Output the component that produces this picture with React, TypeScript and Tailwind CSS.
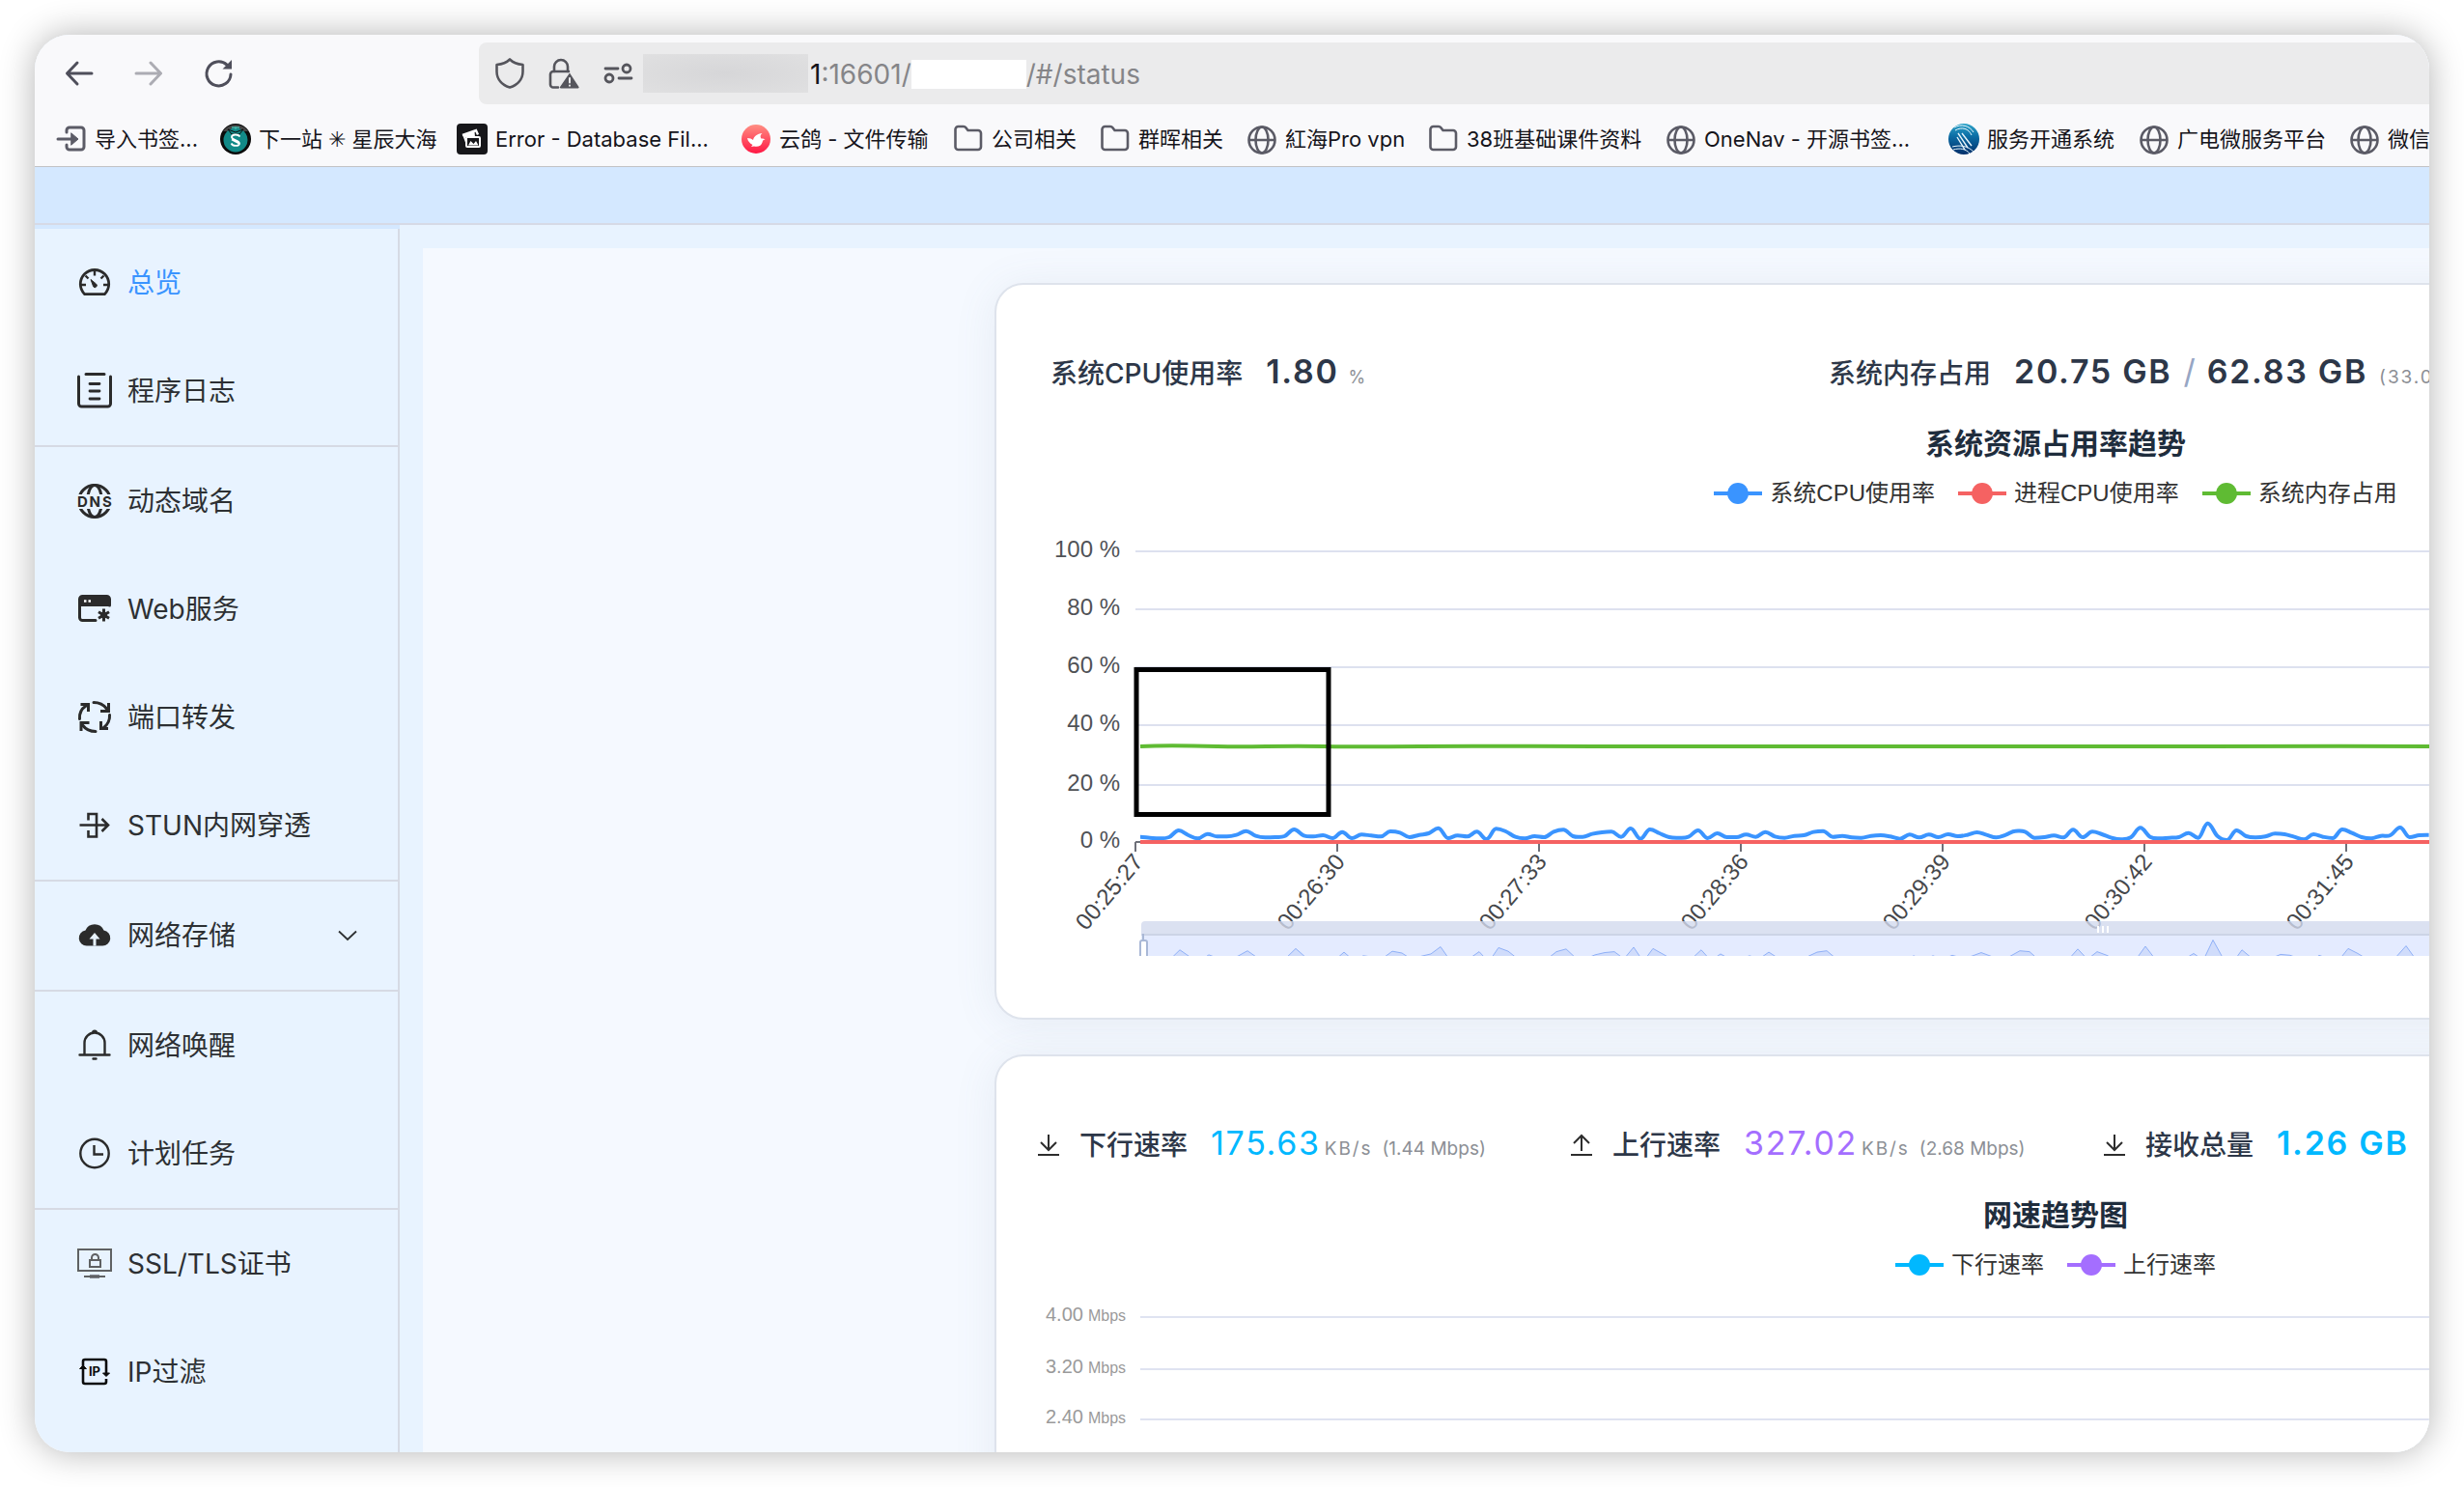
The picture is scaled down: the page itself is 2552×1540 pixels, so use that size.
import type { ReactNode } from "react";

/* ---------- browser chrome ---------- */

const BackIcon = () => (
  <svg viewBox="0 0 32 32" className="size-8" fill="none" stroke="currentColor" strokeWidth="3" strokeLinecap="round" strokeLinejoin="round">
    <path d="M29 16H4M14 5 3.500 16 14 27" />
  </svg>
);

const ForwardIcon = () => (
  <svg viewBox="0 0 32 32" className="size-8" fill="none" stroke="currentColor" strokeWidth="3" strokeLinecap="round" strokeLinejoin="round">
    <path d="M3 16h25M18 5l10.500 11L18 27" />
  </svg>
);

const ReloadIcon = () => (
  <svg viewBox="0 0 32 32" className="size-8" fill="none" stroke="currentColor" strokeWidth="3" strokeLinecap="round">
    <path d="M29 17a12.500 12.500 0 1 1-4-9.800" />
    <path d="M30 2v9.500h-9.500z" fill="currentColor" stroke="none" />
  </svg>
);

const ShieldIcon = () => (
  <svg viewBox="0 0 32 32" className="size-8" fill="none" stroke="currentColor" strokeWidth="2.600" strokeLinejoin="round">
    <path d="M16 1.500C19 4.500 24 6.500 29.500 7v7C29.500 22 24 28 16 30.500 8 28 2.500 22 2.500 14V7C8 6.500 13 4.500 16 1.500z" />
  </svg>
);

const LockWarningIcon = () => (
  <svg viewBox="0 0 32 32" className="size-8" fill="none" stroke="currentColor" strokeWidth="2.600" strokeLinecap="round">
    <path d="M6 14V9a7 7 0 0 1 14 0v5" />
    <path d="M10 30.500H5a3 3 0 0 1-3-3V17a3 3 0 0 1 3-3h16" />
    <path d="M22 15.500 31.500 30a1 1 0 0 1-1 1.500H13a1 1 0 0 1-1-1.500z" fill="currentColor" stroke="none" />
    <path d="M22 21v4.500M22 28.500v.3" stroke="#ebebec" strokeWidth="2" />
  </svg>
);

const PermissionsIcon = () => (
  <svg viewBox="0 0 32 32" className="size-8" fill="none" stroke="currentColor" strokeWidth="2.800" strokeLinecap="round">
    <path d="M3 11h13M17 21h13" />
    <circle cx="25" cy="11" r="4" />
    <circle cx="7" cy="21" r="4" />
  </svg>
);

const ImportIcon = () => (
  <svg viewBox="0 0 32 32" className="size-8 text-[#5b5b66]" fill="none" stroke="currentColor" strokeWidth="3" strokeLinecap="round">
    <path d="M11 9V7a3 3 0 0 1 3-3h12a3 3 0 0 1 3 3v17a3 3 0 0 1-3 3H14a3 3 0 0 1-3-3v-2" />
    <path d="M2 16h18" />
    <path d="m16 10 7 6-7 6z" fill="currentColor" strokeWidth="1" />
  </svg>
);

const FolderIcon = () => (
  <svg viewBox="0 0 32 32" className="size-8 text-[#5b5b66]" fill="none" stroke="currentColor" strokeWidth="2.600" strokeLinejoin="round">
    <path d="M2.500 24V6a3 3 0 0 1 3-3h5.500a3 3 0 0 1 2.400 1.200L15.500 7H26a3 3 0 0 1 3 3v14a3 3 0 0 1-3 3H5.500a3 3 0 0 1-3-3z" />
  </svg>
);

const GlobeIcon = () => (
  <svg viewBox="0 0 32 32" className="size-8 text-[#5b5b66]" fill="none" stroke="currentColor" strokeWidth="2.600">
    <circle cx="16" cy="17" r="13.500" />
    <ellipse cx="16" cy="17" rx="6.500" ry="13.500" />
    <path d="M2.500 17h27" />
  </svg>
);

const StarSeaIcon = () => (
  <svg viewBox="0 0 32 32" className="size-8">
    <circle cx="16" cy="16" r="16" fill="#0c0c0c" />
    <path d="M3 8A16 16 0 0 1 29 8z" fill="#454545" />
    <circle cx="16" cy="17" r="12.500" fill="#128a88" />
    <path d="M8 6l8 3 8-3-4 5h-8z" fill="#128a88" stroke="#0c0c0c" strokeWidth="1" />
    <path d="M12 4h8M16 3v3" stroke="#3fb3a6" strokeWidth="1.500" />
    <path d="M20.500 13.500c-2-3-8.500-2.500-8.500.5s8 3 8 6.500-7 3-8.500 0M12 16.500l8.500 4.500" fill="none" stroke="#fff" strokeWidth="1.800" />
  </svg>
);

const SynologyPhotosIcon = () => (
  <svg viewBox="0 0 32 32" className="size-8">
    <rect width="32" height="32" rx="4" fill="#17171a" />
    <path d="M6 12 20 7l2 4.500" fill="none" stroke="#fff" strokeWidth="2.400" />
    <path d="M6 11.500l3 8V14h10l-.5-6z" fill="#fff" />
    <rect x="10" y="14" width="14" height="10" rx="1" fill="none" stroke="#fff" strokeWidth="2" />
    <path d="M12 22.500l2.500-4.500 3 3 2.500-3 2.500 4.500z" fill="#fff" />
  </svg>
);

const DoveIcon = () => (
  <svg viewBox="0 0 32 32" className="size-8">
    <defs>
      <linearGradient id="dove" x1="0" y1="0" x2="0" y2="1">
        <stop offset="0" stopColor="#ff8f83" />
        <stop offset="1" stopColor="#ff1744" />
      </linearGradient>
    </defs>
    <circle cx="16" cy="16" r="15" fill="url(#dove)" />
    <path d="M7 15c3 0 4.500.8 6 2C14 13 17 10.500 22.500 10c-2.500 2-2 4-1 5.500 0 0 2.500-.5 4 1-2 0-2.500 1-3 3-.8 3.500-4.500 5-8.500 4l-3 .5 1.500-2C9.500 20.500 7.500 18 7 15z" fill="#fff" />
  </svg>
);

const ServiceIcon = () => (
  <svg viewBox="0 0 32 32" className="size-8">
    <defs>
      <linearGradient id="svc" x1="0" y1="0" x2="0" y2="1">
        <stop offset="0" stopColor="#2fa4c8" />
        <stop offset="0.400" stopColor="#0c6ea6" />
        <stop offset="1" stopColor="#04306b" />
      </linearGradient>
      <clipPath id="svcClip"><circle cx="16" cy="16" r="16" /></clipPath>
    </defs>
    <circle cx="16" cy="16" r="16" fill="url(#svc)" />
    <g clipPath="url(#svcClip)" fill="none" stroke="#e8f5fb">
      <path d="M6 4C13 0 22 2 26 9M7 7c7-4 14-2 17 5" strokeWidth="1" />
      <path d="M10 10l10 15M14 10l10 13M9 14l8 13" strokeWidth="1.400" />
      <path d="M4 24c8-2 16-1 22 5M5 27c7-2 13-1 17 4" strokeWidth="1" />
    </g>
  </svg>
);

type Bookmark = { label: string; icon: ReactNode; width: string };

const bookmarks: Bookmark[] = [
  { label: "导入书签...", icon: <ImportIcon />, width: "w-[170px]" },
  { label: "下一站 ✳︎ 星辰大海", icon: <StarSeaIcon />, width: "w-[245px]" },
  { label: "Error - Database Fil...", icon: <SynologyPhotosIcon />, width: "w-[294px]" },
  { label: "云鸽 - 文件传输", icon: <DoveIcon />, width: "w-[220px]" },
  { label: "公司相关", icon: <FolderIcon />, width: "w-[152px]" },
  { label: "群晖相关", icon: <FolderIcon />, width: "w-[152px]" },
  { label: "紅海Pro vpn", icon: <GlobeIcon />, width: "w-[188px]" },
  { label: "38班基础课件资料", icon: <FolderIcon />, width: "w-[246px]" },
  { label: "OneNav - 开源书签...", icon: <GlobeIcon />, width: "w-[293px]" },
  { label: "服务开通系统", icon: <ServiceIcon />, width: "w-[197px]" },
  { label: "广电微服务平台", icon: <GlobeIcon />, width: "w-[218px]" },
  { label: "微信", icon: <GlobeIcon />, width: "w-[120px]" },
];

function BrowserBar() {
  return (
    <div className="shrink-0 border-b border-[#c2c2c5] bg-[#f9f9fb]">
      <div className="flex h-20 items-center pl-[30px]">
        <div className="flex w-[430px] shrink-0 gap-10 text-[#4f4f5b]">
          <button aria-label="后退"><BackIcon /></button>
          <button aria-label="前进" className="opacity-45"><ForwardIcon /></button>
          <button aria-label="刷新"><ReloadIcon /></button>
        </div>
        <div className="flex h-16 flex-1 items-center rounded-l-lg bg-[#ebebec] pl-4 text-[#55555c]">
          <div className="flex gap-6">
            <ShieldIcon />
            <LockWarningIcon />
            <PermissionsIcon />
          </div>
          <div className="mr-0.5 ml-2.5 h-10 w-[171px] bg-[radial-gradient(ellipse_at_center,#d6d6d8,#e0e0e1)]" />
          <div className="flex items-center pt-0.5 text-[28px] leading-10 text-[#858588]">
            <span className="text-[#15141a]">1</span>
            <span>:16601/</span>
            <span className="h-[30px] w-[119px] bg-white" />
            <span>/#/status</span>
          </div>
        </div>
      </div>
      <nav className="flex h-14 items-center overflow-hidden pl-[22px] text-[22px] text-[#15141a]">
        {bookmarks.map((b) => (
          <a key={b.label} href="#" className={`flex shrink-0 items-center gap-2 whitespace-nowrap ${b.width}`}>
            {b.icon}
            <span>{b.label}</span>
          </a>
        ))}
      </nav>
    </div>
  );
}

/* ---------- sidebar ---------- */

const Glyph = ({ children }: { children: ReactNode }) => (
  <svg viewBox="0 0 36 36" className="size-9 shrink-0 overflow-visible text-[#2b2b2b]" fill="none" stroke="currentColor" strokeWidth="2.400">
    {children}
  </svg>
);

const icons = {
  overview: (
    <Glyph>
      <path d="M7.700 29.700A14.700 14.700 0 1 1 28.300 29.700z" strokeLinejoin="round" strokeWidth="2.800" />
      <path d="M18 6v4.500M4 20h5M27 20h5M8.500 10.500l3 3M27.500 10.500l-3 3" />
      <path d="M14 14.500l5.500 4.500a2 2 0 1 1-2.800 2.800z" fill="currentColor" strokeWidth="1" />
    </Glyph>
  ),
  logs: (
    <Glyph>
      <path d="M1.500 3v28a3 3 0 0 0 3 3h27a3 3 0 0 0 3-3V3M9 .500h19" strokeWidth="3" strokeLinecap="round" />
      <path d="M13 10.500h10M13 18h10M13 26h10" strokeWidth="2.800" strokeLinecap="round" />
    </Glyph>
  ),
  dns: (
    <Glyph>
      <defs>
        <clipPath id="dnsClip"><path d="M-1-1h38v12H-1zM-1 26h38v12H-1z" /></clipPath>
      </defs>
      <g clipPath="url(#dnsClip)" strokeWidth="3">
        <circle cx="18" cy="18" r="16.500" />
        <ellipse cx="18" cy="18" rx="7.500" ry="16.500" />
      </g>
      <text x="0 12.500 26" y="24" fontSize="15" fontWeight="700" fill="currentColor" stroke="none">DNS</text>
    </Glyph>
  ),
  web: (
    <Glyph>
      <path d="M33.500 14V7.500a3 3 0 0 0-3-3h-25a3 3 0 0 0-3 3v19a3 3 0 0 0 3 3H19" strokeWidth="3" strokeLinecap="round" />
      <path d="M2 5h32v10H2z" fill="currentColor" stroke="none" />
      <path d="M7 9.500h2.500M11.500 9.500H14" stroke="#fff" strokeWidth="2.600" />
      <path d="M27.500 17.500v13M22 20.800l11 6.400M33 20.800l-11 6.400" strokeWidth="3" />
      <circle cx="27.500" cy="24" r="3.500" fill="currentColor" stroke="none" />
    </Glyph>
  ),
  forward: (
    <Glyph>
      <path d="M17 2.500c6 0 10.500 2.500 13.500 6.500M33.500 15.500c.5 5.500-2 10-6.500 13.500M19 32.500c-6 0-10.500-2.500-13.500-6.500M2.500 19.500C2 14 4.500 9 9 6" strokeWidth="3" strokeLinecap="round" />
      <path d="M32.500 3v8.500H24M32 29.500h-7.500V22M4 32v-8.500h8.500M3.500 4.500h8V12" strokeWidth="3" />
    </Glyph>
  ),
  stun: (
    <Glyph>
      <path d="M2.500 17.500h29M25.500 11l6.500 6.500-6.500 6.500M11.500 12.500V6H20v23.500h-8.500V23" strokeWidth="2.600" />
    </Glyph>
  ),
  storage: (
    <Glyph>
      <path d="M10 28.500A8 8 0 0 1 8.500 12.600 10.300 10.300 0 0 1 27.500 12.600 8 8 0 0 1 26 28.500z" fill="currentColor" stroke="none" />
      <path d="M18 15l5.500 6.500H19.500V28.500h-3V21.500H12.500z" fill="#e8f3ff" stroke="none" />
    </Glyph>
  ),
  wake: (
    <Glyph>
      <path d="M2.500 27.500h31M7.500 27V15a10.500 10.500 0 0 1 21 0v12M16.500 31.500h3" strokeLinecap="round" />
      <path d="M15 4.500a3 3 0 0 1 6 0z" fill="currentColor" stroke="none" />
    </Glyph>
  ),
  cron: (
    <Glyph>
      <circle cx="18" cy="17.500" r="14.700" />
      <path d="M17.500 9v9.500H27" />
    </Glyph>
  ),
  ssl: (
    <Glyph>
      <g stroke="#5f6163" strokeWidth="2">
        <path d="M1 3h34v22H1zM13 14h11v7H13zM15 14v-2.500a3.500 3.500 0 0 1 7 0V14M7 31h22" />
        <path d="M13 31h10" strokeWidth="3.500" />
      </g>
    </Glyph>
  ),
  ip: (
    <Glyph>
      <g stroke="#0c0c0c">
        <path d="M6 15V7a2 2 0 0 1 2-2h20a2 2 0 0 1 2 2v12M30 25v3a2 2 0 0 1-2 2H8a2 2 0 0 1-2-2V13" strokeWidth="2.600" />
        <path d="M2.500 14.500 6 11l3.500 3.500zM26.500 19l3.500 3.500 3.500-3.500z" fill="#0c0c0c" strokeWidth="1" />
      </g>
      <text x="18" y="22" textAnchor="middle" fontSize="13" fontWeight="700" fill="#0c0c0c" stroke="none">IP</text>
    </Glyph>
  ),
};

type Item = { label: string; icon: ReactNode; active?: boolean; submenu?: boolean };

const groups: Item[][] = [
  [
    { label: "总览", icon: icons.overview, active: true },
    { label: "程序日志", icon: icons.logs },
  ],
  [
    { label: "动态域名", icon: icons.dns },
    { label: "Web服务", icon: icons.web },
    { label: "端口转发", icon: icons.forward },
    { label: "STUN内网穿透", icon: icons.stun },
  ],
  [{ label: "网络存储", icon: icons.storage, submenu: true }],
  [
    { label: "网络唤醒", icon: icons.wake },
    { label: "计划任务", icon: icons.cron },
  ],
  [
    { label: "SSL/TLS证书", icon: icons.ssl },
    { label: "IP过滤", icon: icons.ip },
  ],
];

function Sidebar() {
  return (
    <aside className="flex w-[378px] shrink-0 flex-col border-t-4 border-t-[#d4e8ff]">
      <nav className="flex-1 divide-y-2 divide-[#d6dae4] border-r-2 border-[#d6dae4]">
        {groups.map((group) => (
          <ul key={group[0].label}>
            {group.map((item) => (
              <li key={item.label}>
                <a
                  href="#"
                  className={`flex h-28 items-center gap-4 pr-[42px] pl-11 text-[28px] ${item.active ? "text-[#3a94ff]" : "text-[#2d3033]"}`}
                >
                  {item.icon}
                  <span className="flex-1 whitespace-nowrap">{item.label}</span>
                  {item.submenu && (
                    <svg viewBox="0 0 20 20" className="size-5" fill="none" stroke="#2d3033" strokeWidth="1.800">
                      <path d="M1 5.500l9 8.500 9-8.500" />
                    </svg>
                  )}
                </a>
              </li>
            ))}
          </ul>
        ))}
      </nav>
    </aside>
  );
}

/* ---------- cards ---------- */

/* CPU load sampled every three seconds, nine units to the percent. */
const cpuSamples = [
  16, 13, 11, 15, 36, 21, 11, 25, 17, 17, 22, 34, 19, 14, 15, 18, 39, 20, 17, 21, 12, 31, 12, 23, 20, 17, 33, 29, 15, 22,
  27, 43, 12, 20, 17, 32, 9, 41, 33, 16, 11, 18, 15, 32, 38, 18, 16, 25, 30, 32, 16, 42, 10, 39, 27, 15, 13, 16, 36, 12,
  27, 15, 15, 23, 16, 31, 17, 13, 19, 21, 31, 34, 16, 19, 14, 13, 19, 21, 17, 10, 23, 14, 23, 15, 24, 18, 22, 30, 22, 14,
  22, 34, 32, 13, 15, 20, 14, 38, 15, 32, 24, 13, 8, 14, 44, 16, 11, 13, 15, 28, 13, 58, 19, 6, 36, 18, 14, 17, 26, 24,
  16, 8, 24, 16, 12, 39, 28, 15, 11, 19, 21, 45, 15, 21, 22,
];

const BASE = 345;
const LEFT = 149;

function smoothPath(values: number[], step: number) {
  const pts = values.map((v, i) => [LEFT + i * step, BASE - v / 3]);
  const slope = pts.map((p, i) => {
    if (i === 0 || i === pts.length - 1) return 0;
    const before = p[1] - pts[i - 1][1];
    const after = pts[i + 1][1] - p[1];
    return before * after <= 0 ? 0 : (before + after) / 2;
  });
  return pts.reduce((d, [x, y], i) => {
    if (i === 0) return `M${x} ${y}`;
    const [px, py] = pts[i - 1];
    const h = step * 0.38;
    return `${d}C${px + h} ${py + slope[i - 1] * 0.38} ${x - h} ${y - slope[i] * 0.38} ${x} ${y}`;
  }, "");
}

const cpuPath = smoothPath(cpuSamples, 9.96);
const shadowPoints = cpuSamples.map((v, i) => `${150 + i * 10},${473.5 - v * 0.465}`).join(" ");

const percentTicks = [
  { label: "100 %", y: 44 },
  { label: "80 %", y: 104 },
  { label: "60 %", y: 164 },
  { label: "40 %", y: 224 },
  { label: "20 %", y: 286 },
  { label: "0 %", y: BASE },
];

const timeTicks = ["00:25:27", "00:26:30", "00:27:33", "00:28:36", "00:29:39", "00:30:42", "00:31:45"];

function UsageChart() {
  return (
    <svg viewBox="0 0 2194 463" className="h-[463px] w-[2194px]" fill="none" fontFamily="Liberation Sans, sans-serif">
      {percentTicks.map((t) => (
        <g key={t.label}>
          {t.y < BASE && <path d={`M144 ${t.y}H2150`} stroke="#dde1ef" strokeWidth="2" />}
          <text x="128" y={t.y + 6} textAnchor="end" fontSize="24" fill="#505256">{t.label}</text>
        </g>
      ))}
      <path d="M144 345h2006" stroke="#6e7079" strokeWidth="2" />
      {timeTicks.map((t, i) => (
        <g key={t} transform={`translate(${144 + i * 209} ${BASE})`}>
          <path d="M0 0v10" stroke="#6e7079" strokeWidth="2" />
          <text transform="translate(3 16) rotate(-50)" x="0" y="8" textAnchor="end" fontSize="24" fill="#45474b">{t}</text>
        </g>
      ))}
      <path d={cpuPath} stroke="#3a94ff" strokeWidth="4" strokeLinejoin="round" />
      <path d="M149 345H2150" stroke="#f56262" strokeWidth="4" />
      <path d="M149 246c20-1 40-1 80 0s60-1 110 0 150-1 300 0 300-1 500 0 250-1 400 0h612" stroke="#5fbb33" strokeWidth="4" />
      <rect x="145" y="166.500" width="199" height="150" stroke="#000" strokeWidth="5" />
      {/* zoom slider */}
      <path d="M150 463V431a4 4 0 0 1 4-4h2000v14z" fill="#d2daee" fillOpacity="0.800" />
      <path d="M150 441h2004v22H150z" fill="#e4ebff" />
      <path d="M150 441h2004" stroke="#ccd4e6" strokeWidth="2" />
      <polygon points={`150,480 ${shadowPoints} 1490,480`} fill="#d0dcfb" stroke="#8fb0f7" strokeWidth="1" />
      <path d="M1141 432v7M1146 432v7M1151 432v7" stroke="#fff" strokeWidth="2" />
      <path d="M152 440v8" stroke="#a9b8d6" strokeWidth="2" />
      <rect x="149" y="447" width="7" height="30" rx="2" fill="#fff" stroke="#a9b8d6" strokeWidth="2" />
    </svg>
  );
}

const speedTicks = [
  { label: "4.00", y: 38 },
  { label: "3.20", y: 92 },
  { label: "2.40", y: 144 },
];

function SpeedChart() {
  return (
    <svg viewBox="0 0 2194 463" className="h-[463px] w-[2194px]" fill="#9a9a9a" fontFamily="Liberation Sans, sans-serif">
      {speedTicks.map((t) => (
        <g key={t.label}>
          <text x="51" y={t.y + 4} fontSize="20">
            {t.label}
            <tspan dx="5" fontSize="16">Mbps</tspan>
          </text>
          <path d={`M149 ${t.y}H2150`} stroke="#dfe3f1" strokeWidth="2" />
        </g>
      ))}
    </svg>
  );
}

function Legend({ items }: { items: { label: string; color: string }[] }) {
  return (
    <ul className="mt-4 flex h-8 items-center justify-center gap-6 text-[24px] leading-8">
      {items.map((item) => (
        <li key={item.label} className={`flex items-center gap-2 ${item.color}`}>
          <svg viewBox="0 0 50 22" className="h-[22px] w-[50px]" fill="currentColor">
            <path d="M0 9h50v4H0z" />
            <circle cx="25" cy="11" r="11" />
          </svg>
          <span className="font-['Liberation_Sans','Noto_Sans_CJK_SC',sans-serif] text-[#333]">{item.label}</span>
        </li>
      ))}
    </ul>
  );
}

function Card({ title, stats, legend, children }: { title: string; stats: ReactNode; legend: { label: string; color: string }[]; children: ReactNode }) {
  return (
    <section className="w-[2198px] shrink-0 rounded-[30px] border-2 border-[#dee3ec] bg-white pt-[66px] pb-16 shadow-[0_4px_44px_rgba(100,116,150,0.100)]">
      <div className="flex h-12 items-baseline whitespace-nowrap text-[28px] leading-[48px] text-[#2d3748]">{stats}</div>
      <h2 className="mt-[30px] text-center text-[30px] leading-10 font-bold text-[#1f2d3d]">{title}</h2>
      <Legend items={legend} />
      {children}
    </section>
  );
}

const Arrow = ({ up }: { up?: boolean }) => (
  <svg viewBox="0 0 24 24" className="mt-3.5 mr-5 size-6 self-start" fill="none" stroke="#2d2d2d" strokeWidth="2">
    <path d={up ? "M12 18V2M4 10l8-8 8 8M1 22h22" : "M12 1v16M4 9l8 8 8-8M1 22h22"} />
  </svg>
);

function Rate({ label, value, mbps, color, up }: { label: string; value: string; mbps: string; color: string; up?: boolean }) {
  return (
    <div className="flex w-[552px] shrink-0 items-baseline">
      <Arrow up={up} />
      <span className="font-medium">{label}</span>
      <span className={`ml-6 text-[34px] tracking-wider ${color}`}>{value}</span>
      <small className="ml-1 text-[19px] tracking-widest text-[#8c8f95]">KB/s</small>
      <small className="ml-2.5 text-[19px] text-[#8c8f95]">({mbps} Mbps)</small>
    </div>
  );
}

function Dashboard() {
  return (
    <main className="min-w-0 flex-1 overflow-hidden pt-6 pl-6">
      <div className="flex h-full flex-col gap-9 bg-[#f5f9ff] pt-9 pl-[592px]">
        <Card
          title="系统资源占用率趋势"
          legend={[
            { label: "系统CPU使用率", color: "text-[#3a94ff]" },
            { label: "进程CPU使用率", color: "text-[#f56262]" },
            { label: "系统内存占用", color: "text-[#5fbb33]" },
          ]}
          stats={
            <>
              <div className="ml-14 flex w-[806px] shrink-0 items-baseline">
                <span className="font-medium">系统CPU使用率</span>
                <span className="ml-6 text-[34px] font-semibold tracking-wider">1.80</span>
                <small className="ml-2.5 text-[18px] text-[#8c8f95]">%</small>
              </div>
              <div className="flex items-baseline">
                <span className="font-medium">系统内存占用</span>
                <span className="ml-6 text-[34px] font-semibold tracking-wider">20.75 GB</span>
                <span className="mx-3 text-[34px] text-[#97a6c4]">/</span>
                <span className="text-[34px] font-semibold tracking-wider">62.83 GB</span>
                <small className="ml-3 text-[19px] tracking-widest text-[#8c8f95]">(33.02%)</small>
              </div>
            </>
          }
        >
          <UsageChart />
        </Card>
        <Card
          title="网速趋势图"
          legend={[
            { label: "下行速率", color: "text-[#00b8ff]" },
            { label: "上行速率", color: "text-[#a46eff]" },
          ]}
          stats={
            <div className="ml-[42px] flex">
              <Rate label="下行速率" value="175.63" mbps="1.44" color="text-[#00b8ff]" />
              <Rate label="上行速率" value="327.02" mbps="2.68" color="text-[#a46eff]" up />
              <div className="flex items-baseline">
                <Arrow />
                <span className="font-medium">接收总量</span>
                <span className="ml-6 text-[34px] font-semibold tracking-wider text-[#00b8ff]">1.26 GB</span>
              </div>
            </div>
          }
        >
          <SpeedChart />
        </Card>
      </div>
    </main>
  );
}

export default function App() {
  return (
    <div className="h-screen bg-white p-9 font-['Inter','Noto_Sans_CJK_SC',sans-serif]" lang="zh-CN">
      <div className="h-full rounded-[36px] shadow-[0_0_36px_rgba(0,0,0,0.300)]">
        <div className="flex h-full flex-col overflow-hidden rounded-[36px] bg-[#e8f3ff]">
          <BrowserBar />
          <header className="h-[60px] shrink-0 border-b-2 border-[#d6dae6] bg-[#d4e8ff]" />
          <div className="flex min-h-0 flex-1 overflow-hidden">
            <Sidebar />
            <Dashboard />
          </div>
        </div>
      </div>
    </div>
  );
}
